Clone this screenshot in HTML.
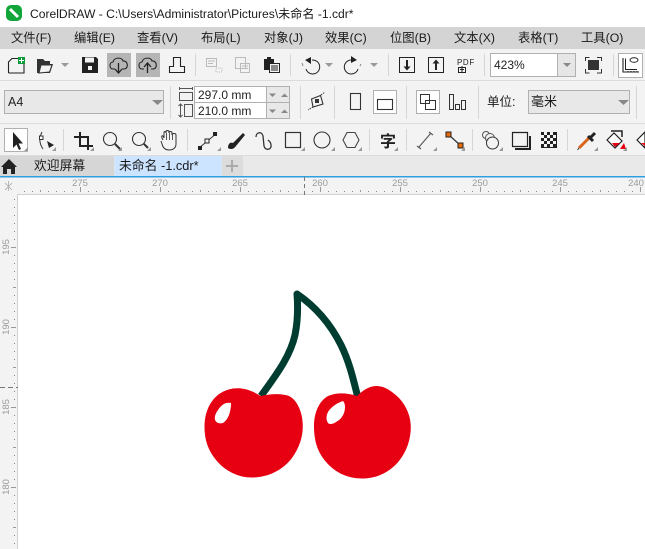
<!DOCTYPE html>
<html><head><meta charset="utf-8">
<style>
html,body{margin:0;padding:0;background:#fff;width:645px;height:549px;overflow:hidden}
svg{display:block}
text{font-family:"Liberation Sans","Noto Sans CJK SC",sans-serif}
.m{font-size:12.3px;fill:#1a1a1a}
.r{font-size:9.5px;fill:#9a9a9a;text-anchor:middle}
.s{stroke:#d6d6d6;stroke-width:1}
.i{fill:none;stroke:#222;stroke-width:1.1}
.c{fill:#9a9a9a}
</style></head><body>
<svg width="645" height="549" viewBox="0 0 645 549" xmlns="http://www.w3.org/2000/svg">
<rect width="645" height="549" fill="#fff"/>
<!-- title -->
<rect x="6" y="5" width="16" height="16" rx="5" fill="#12a53a"/>
<path d="M10 9L18 17" stroke="#fff" stroke-width="3"/>
<text x="30" y="18" font-size="12.1" fill="#1a1a1a">CorelDRAW - C:\Users\Administrator\Pictures\未命名 -1.cdr*</text>
<!-- menu -->
<rect y="27" width="645" height="22" fill="#d4d4d4"/>
<text class="m" x="11" y="42">文件(F)</text><text class="m" x="74" y="42">编辑(E)</text><text class="m" x="137" y="42">查看(V)</text><text class="m" x="201" y="42">布局(L)</text><text class="m" x="264" y="42">对象(J)</text><text class="m" x="325" y="42">效果(C)</text><text class="m" x="390" y="42">位图(B)</text><text class="m" x="454" y="42">文本(X)</text><text class="m" x="518" y="42">表格(T)</text><text class="m" x="581" y="42">工具(O)</text>
<!-- bars bg -->
<rect y="49" width="645" height="106" fill="#f3f3f3"/>
<rect y="80" width="645" height="1" fill="#dcdcdc"/>
<rect y="123" width="645" height="1" fill="#dcdcdc"/>
<rect y="155" width="645" height="1" fill="#dcdcdc"/>
<!-- row 1 -->
<path class="i" d="M8.5 73V62L12 58.500H18M24 63V73H8.500"/>
<rect x="18" y="57" width="7" height="7" fill="#0a9a3c"/><path d="M21.500 58V63M19 60.500H24" stroke="#fff"/>
<path d="M37 73V59H43L45 61H50V64H53L50 73Z" fill="#333"/><path d="M39 73L41 65H52L49.500 72Z" fill="#f3f3f3" stroke="#333"/>
<path class="c" d="M61 63H69L65 67Z"/>
<path d="M82 57H96L98 59V73H82Z" fill="#222"/><rect x="85" y="57.500" width="9" height="5" fill="#f3f3f3"/><rect x="88" y="66" width="4" height="4" fill="#f3f3f3"/>
<rect x="107" y="53" width="24" height="24" fill="#b5b5b5"/><rect x="136" y="53" width="24" height="24" fill="#b5b5b5"/>
<path class="i" d="M115 69H113C109 69 109 62 113 62C114 57 122 57 123 61C128 60 129 69 124 69H122"/><path d="M118.500 63V73M115 69L118.500 73L122 69" fill="none" stroke="#222" stroke-width="1.300"/>
<path class="i" d="M144 69H142C138 69 138 62 142 62C143 57 151 57 152 61C157 60 158 69 153 69H151"/><path d="M147.500 73V63M144 67L147.500 63L151 67" fill="none" stroke="#222" stroke-width="1.300"/>
<path class="i" d="M169.500 72.500V66.500H173.500V57.500H180.500V66.500H184.500V72.500Z"/>
<path class="s" d="M195.500 54V76M290.500 54V76M388.500 54V76M484.500 54V76M613.500 54V76"/>
<path d="M206.500 58.500H216.500V66.500H206.500ZM208 61H215M208 63.500H213" fill="none" stroke="#bbb"/><path d="M216 68H222V72H216Z" fill="none" stroke="#bbb" stroke-dasharray="1 1"/>
<path d="M235.500 57.500H245.500V68.500H235.500ZM240.500 63.500H249.500V72.500H240.500ZM242 66H248M242 68.500H248" fill="#f3f3f3" stroke="#bbb"/>
<path d="M264 59H274V70H264Z" fill="#222"/><rect x="267" y="57" width="4" height="3" fill="#222"/><rect x="269.500" y="63.500" width="10" height="9" fill="#f3f3f3" stroke="#222"/><path d="M271 66H278M271 68H278M271 70H278" stroke="#222"/>
<path d="M312 60A7 7 0 1 1 306 69" fill="none" stroke="#222" stroke-width="1"/><path d="M306 59L312 56V63Z" fill="#222" transform="translate(-1 1)"/><path d="M303 66L302 63" stroke="#888"/>
<path class="c" d="M325 63H333L329 67Z"/>
<path d="M351 60A7 7 0 1 0 358 69" fill="none" stroke="#222" stroke-width="1"/><path d="M351 56L357 60L351 63Z" fill="#222"/><path d="M360 66L361 64" stroke="#888"/>
<path class="c" d="M370 63H378L374 67Z"/>
<rect x="399.500" y="57.500" width="15" height="15" fill="none" stroke="#222"/><path d="M407 60V68" stroke="#222" stroke-width="2"/><path d="M403.500 66.500H410.500L407 70.500Z" fill="#222"/>
<rect x="428.500" y="57.500" width="15" height="15" fill="none" stroke="#222"/><path d="M436 62V70" stroke="#222" stroke-width="2"/><path d="M432.500 63.500H439.500L436 59.500Z" fill="#222"/>
<text x="457" y="65" font-size="8" letter-spacing=".6" fill="#222">PDF</text><path d="M458.500 67.500H465.500V72.500H458.500ZM462 66V72M460 69.500H464" fill="none" stroke="#222"/>
<rect x="490.500" y="53.500" width="85" height="23" fill="#fff" stroke="#b0b0b0"/><rect x="558" y="54" width="17" height="22" fill="#e6e6e6"/><path d="M557.500 54V76" stroke="#b0b0b0"/><path d="M563 63H571L567 67Z" fill="#888"/>
<text x="494" y="69" font-size="12" fill="#222">423%</text>
<rect x="588" y="60" width="11" height="10" fill="#333"/><path d="M585.500 61V57.500H589.500M597 57.500H601.500V61M601.500 69V73H597M589.500 73H585.500V69" fill="none" stroke="#333"/>
<rect x="618.500" y="53.500" width="24" height="24" fill="#fff" stroke="#b0b0b0"/>
<path d="M623 58V72H639M625 69.500H637" fill="none" stroke="#222" stroke-width="1.100"/><path d="M625.500 58.500V69.500M628 71V72M631 71V72M634 71V72M637 71V72" stroke="#222"/><ellipse cx="634" cy="60" rx="4" ry="2.300" fill="none" stroke="#222"/>
<!-- row 2 -->
<rect x="4.500" y="90.500" width="159" height="23" fill="#e8e8e8" stroke="#b0b0b0"/>
<text x="8" y="106" font-size="12.500" fill="#222">A4</text><path d="M152 100H163L157.500 105Z" fill="#888"/>
<path class="s" d="M170.500 86V119M300.500 86V119M334.500 86V119M406.500 86V119M478.500 86V119M636.500 86V119"/>
<path d="M179.500 92.500H192.500V100.500H179.500ZM179.500 88.500H192.500M179.500 87V90M192.500 87V90" fill="none" stroke="#555"/>
<path d="M184.500 104.500H192.500V116.500H184.500ZM180.500 104V117M178.500 106L180.500 104L182.500 106M178.500 115L180.500 117L182.500 115" fill="none" stroke="#555"/>
<rect x="194.500" y="86.500" width="95" height="32" fill="#e8e8e8" stroke="#b0b0b0"/>
<rect x="195" y="87" width="71.500" height="15" fill="#fff"/><rect x="195" y="103" width="71.500" height="15" fill="#fff"/>
<path d="M194.500 102.500H289.500M266.500 86.500V118.500" stroke="#b0b0b0"/>
<text x="198" y="99" font-size="12" fill="#222">297.0 mm</text><text x="198" y="115" font-size="12" fill="#222">210.0 mm</text>
<path d="M269 93.500H276L272.500 97ZM269 109.500H276L272.500 113Z" fill="#888"/><path d="M281 97H288L284.500 93.500ZM281 113H288L284.500 109.500Z" fill="#888"/>
<path d="M311.500 99L320.500 95.500L323 104L313 107Z" fill="none" stroke="#333" stroke-width="1.100"/><rect x="315" y="99" width="4" height="4" fill="#333"/><path d="M313 107L308 110M321 95L325 92" stroke="#333" stroke-dasharray="1.500 1"/>
<rect x="350.500" y="93.500" width="10" height="16" fill="none" stroke="#333" stroke-width="1.100"/>
<rect x="373.500" y="90.500" width="23" height="23" fill="#fff" stroke="#b0b0b0"/><rect x="377.500" y="99.500" width="15" height="10" fill="none" stroke="#333" stroke-width="1.100"/>
<rect x="416.500" y="90.500" width="23" height="23" fill="#fff" stroke="#b0b0b0"/><rect x="420.500" y="94.500" width="9" height="9" fill="#fff" stroke="#333"/><rect x="425.500" y="100.500" width="10" height="9" fill="#fff" stroke="#333"/><rect x="425.500" y="100.500" width="4" height="3" fill="none" stroke="#333"/>
<path d="M449.500 94.500H453.500V109.500H449.500ZM455.500 104.500H459.500V109.500H455.500ZM461.500 100.500H465.500V109.500H461.500Z" fill="none" stroke="#333"/>
<text x="487" y="106" font-size="12.500" fill="#1a1a1a">单位:</text>
<rect x="528.500" y="90.500" width="101" height="23" fill="#e8e8e8" stroke="#b0b0b0"/>
<text x="531" y="106" font-size="13" fill="#1a1a1a">毫米</text><path d="M618 100H629L623.500 105Z" fill="#888"/>
<!-- row 3 -->
<rect x="4.500" y="128.500" width="23" height="23" fill="#fff" stroke="#b0b0b0"/>
<path d="M13 132V148L16.500 144.500L19 150L21 149L18.500 143.500H23Z" fill="#222"/>
<path d="M42 132C39 138 39 143 43 149" fill="none" stroke="#333"/><rect x="39.500" y="136" width="3.500" height="3.500" fill="#fff" stroke="#333"/><path d="M47 141L54 145L49 148Z" fill="#222"/>
<path d="M80 132V146H93M74 137H88V150" fill="none" stroke="#222" stroke-width="2"/>
<circle cx="110" cy="139" r="6.500" fill="none" stroke="#333" stroke-width="1.100"/><path d="M115 144L120 149" stroke="#333" stroke-width="2"/>
<circle cx="139" cy="139" r="6.500" fill="none" stroke="#333" stroke-width="1.100"/><path d="M144 144L148 148" stroke="#333" stroke-width="2"/>
<path d="M163 140L162 138C161 135 163 135 164 138V133C164 131 166 131 166 133V132C166 130 169 130 169 132V133C169 131 172 131 172 133V135C172 133 176 133 176 135V144C176 148 173 150 169 150C165 150 163 148 162 144L161 141" fill="none" stroke="#333"/><path d="M166.500 133V140M169.500 133V140M172.500 134V140" stroke="#333" stroke-width=".8"/>
<path d="M199 148L217 133" stroke="#333"/><rect x="198" y="146" width="4" height="4" fill="#222"/><rect x="205" y="139" width="4" height="4" fill="#f3f3f3" stroke="#222"/><rect x="213" y="132" width="4" height="4" fill="#222"/>
<path d="M228 148C228 143 231 142 233 143L243 133L245 135L236 146C234 149 231 150 228 148Z" fill="#222"/>
<path d="M256 137C256 132 262 131 263 136L264 146C265 151 272 150 271 145C271 142 269 141 268 140" fill="none" stroke="#333" stroke-width="1.300"/>
<rect x="285.500" y="132.500" width="15" height="15" fill="none" stroke="#333" stroke-width="1.200"/>
<circle cx="322" cy="140" r="8" fill="none" stroke="#333" stroke-width="1.100"/>
<path d="M343 140L347 132.500H355L359 140L355 147.500H347Z" fill="none" stroke="#444" stroke-width="1.100"/>
<path class="s" d="M63.500 129V151M187.500 129V151M369.500 129V151M406.500 129V151M472.500 129V151M567.500 129V151"/>
<text x="380" y="147" font-size="16" font-weight="bold" fill="#222">字</text>
<path d="M419 147L431 133M417 146L421 149M429 132L433 135" stroke="#555" stroke-width="1.100"/>
<path d="M449 135L460 145" stroke="#333" stroke-width="1.200"/><rect x="446" y="132" width="5" height="5" fill="#e8690b" stroke="#222"/><rect x="458" y="143" width="5" height="5" fill="#e8690b" stroke="#222"/>
<circle cx="486" cy="135" r="3.500" fill="#f3f3f3" stroke="#555"/><circle cx="490" cy="138" r="4.500" fill="#f3f3f3" stroke="#555"/><circle cx="492.500" cy="143" r="6" fill="#f3f3f3" stroke="#333"/>
<path d="M512.500 132.500H527.500V146.500H512.500Z" fill="none" stroke="#222" stroke-width="1.200"/><path d="M530 136V149H515" fill="none" stroke="#222" stroke-width="2"/>
<rect x="541" y="132" width="16" height="16" fill="#222"/>
<path d="M544 132h3v3h-3zM550 132h3v3h-3zM541 135h3v3h-3zM547 135h3v3h-3zM553 135h3v3h-3zM544 138h3v3h-3zM550 138h3v3h-3zM541 141h3v3h-3zM547 141h3v3h-3zM553 141h3v3h-3zM544 144h3v3h-3zM550 144h3v3h-3z" fill="#f3f3f3"/>
<path d="M579 148L590 137" stroke="#d9651a" stroke-width="3"/><path d="M577.500 150L579 148" stroke="#333"/><path d="M588 136L593 141M591 137L595 133" stroke="#222" stroke-width="3"/>
<path d="M607 140L614 133L622 141L615 148Z" fill="#fff" stroke="#222" stroke-width="1.200"/><path d="M612 143H620L615 147Z" fill="#e60012"/><path d="M611 131H622V137" fill="none" stroke="#222" stroke-width="1.500"/><path d="M620 149L624 143L626 149Z" fill="#e60012"/>
<path d="M637 140L645 132V148Z" fill="#fff" stroke="#222" stroke-width="1.200"/><path d="M641 143H645V146Z" fill="#e60012"/>
<!-- fly-out triangles -->
<path d="M28 151v-4l-4 4zM56 151v-4l-4 4zM94 151v-4l-4 4zM122 151v-4l-4 4zM151 151v-4l-4 4zM221 151v-4l-4 4zM305 151v-4l-4 4zM335 151v-4l-4 4zM362 151v-4l-4 4zM398 151v-4l-4 4zM437 151v-4l-4 4zM465 151v-4l-4 4zM503 151v-4l-4 4zM598 151v-4l-4 4zM627 151v-4l-4 4z" fill="#999"/>
<!-- tabs -->
<rect y="156" width="645" height="20" fill="#e9e9e9"/>
<rect y="156" width="114" height="20" fill="#d6d6d6"/>
<rect x="114.500" y="156" width="107" height="20" fill="#cce4ff"/>
<rect x="222" y="156" width="21" height="20" fill="#dcdcdc"/>
<path d="M1 167L9 159L17 167H15V174H11V169H7V174H3V167Z" fill="#222"/>
<text x="34" y="170" font-size="12.800" fill="#1a1a1a">欢迎屏幕</text>
<text x="119" y="170" font-size="12.800" fill="#1a1a1a">未命名 -1.cdr*</text>
<path d="M232 160V172M226 166H238" stroke="#aaa" stroke-width="2"/>
<rect y="176" width="645" height="1.500" fill="#2f9fe0"/>
<!-- rulers -->
<rect y="177.500" width="645" height="17.500" fill="#f3f3f3"/>
<rect y="195" width="18" height="354" fill="#f3f3f3"/>
<rect x="17" y="194" width="628" height="1" fill="#d2d2d2"/>
<rect x="17" y="194" width="1" height="355" fill="#d2d2d2"/>
<path d="M5 183L12 190M12 183L5 190M8.500 181V191" stroke="#aaa" stroke-width=".8"/>
<text class="r" x="80" y="186">275</text><text class="r" x="160" y="186">270</text><text class="r" x="240" y="186">265</text><text class="r" x="320" y="186">260</text><text class="r" x="400" y="186">255</text><text class="r" x="480" y="186">250</text><text class="r" x="560" y="186">245</text><text class="r" x="636" y="186">240</text>
<path d="M24 191.500H645" stroke="#888" stroke-dasharray="1 7"/>
<path d="M80.500 187V192M160.500 187V192M240.500 187V192M320.500 187V192M400.500 187V192M480.500 187V192M560.500 187V192M640.500 187V192" stroke="#999"/>
<path d="M40.500 190V192M120.500 190V192M200.500 190V192M280.500 190V192M360.500 190V192M440.500 190V192M520.500 190V192M600.500 190V192" stroke="#999"/>
<path d="M304.500 177V195" stroke="#777" stroke-dasharray="4 3"/>
<path d="M14.500 199V549" stroke="#888" stroke-dasharray="1 7"/>
<path d="M11 247.500H16M11 327.500H16M11 407.500H16M11 487.500H16M13 287.500H16M13 367.500H16M13 447.500H16M13 527.500H16" stroke="#999"/>
<path d="M0 387.500H18" stroke="#777" stroke-dasharray="5 3"/>
<text class="r" transform="translate(9 247) rotate(-90)">195</text>
<text class="r" transform="translate(9 327) rotate(-90)">190</text>
<text class="r" transform="translate(9 407) rotate(-90)">185</text>
<text class="r" transform="translate(9 487) rotate(-90)">180</text>
<!-- cherries -->
<path d="M261 396C276 375 290 357 295 335C298 320 298 306 297 294C316 307 331 325 341 345C349 361 353 378 357.500 396" fill="none" stroke="#003c30" stroke-width="7" stroke-linejoin="round" stroke-linecap="butt"/>
<path d="M260.500 396C250 389 241 387.500 233 388.500C214 391.500 204.500 408 204.500 427C204.500 440 208 450 216 460C225 471 238 477.500 252 477.500C267 477.500 282 471 292 458C299 448 302.800 438 302.800 426C302.800 412 297 400 289 396C281 393 270 394 260.500 396Z" fill="#e60012"/>
<path d="M357 396C348 393 337 392 328 396C319 401 314 413 314 426C314 442 318 453 327 463C336 473 348 478.500 362 478.500C377 478.500 390 472 399 461C407 451 410.800 439 410.800 427C410.800 416 406 405 398 397C391 391 385 386 376 386C369 386 362 391 357 396Z" fill="#e60012"/>
<path d="M231 403C226 402 222 404 218 410C215 414 214 418 215.500 421C217 423 220 424 223 423C228 420 231 412 231 403Z" fill="#fff"/>
<path d="M343 401C337 403 331 407 328 412C326 416 326 420 328 423C330 425 333 424 336 422C342 419 345 413 345 407C345 404 344 402 343 401Z" fill="#fff"/>
</svg>
</body></html>
